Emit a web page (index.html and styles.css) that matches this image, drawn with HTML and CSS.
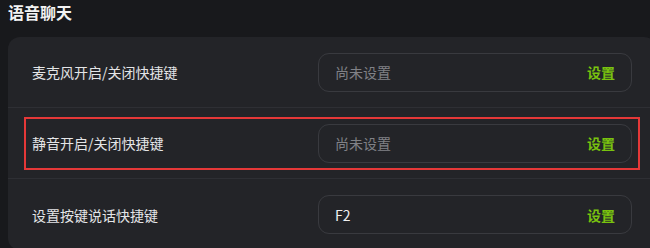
FILE: index.html
```html
<!DOCTYPE html>
<html lang="zh-CN">
<head>
  <meta charset="UTF-8" />
  <meta name="viewport" content="width=device-width, initial-scale=1.0"/>
  <title>语音聊天</title>
  <link rel="stylesheet" href="styles.css">
</head>
<body>
  <div class="section-title">语音聊天</div>

  <div class="panel">
    <div class="row">
      <div class="row-inner">
        <div class="label">麦克风开启/关闭快捷键</div>
        <div class="hotkey">
          <span class="value empty">尚未设置</span>
          <span class="set-btn">设置</span>
        </div>
      </div>
    </div>

    <div class="row">
      <div class="row-inner highlight">
        <div class="label">静音开启/关闭快捷键</div>
        <div class="hotkey">
          <span class="value empty">尚未设置</span>
          <span class="set-btn">设置</span>
        </div>
      </div>
    </div>

    <div class="row">
      <div class="row-inner">
        <div class="label">设置按键说话快捷键</div>
        <div class="hotkey">
          <span class="value">F2</span>
          <span class="set-btn">设置</span>
        </div>
      </div>
    </div>
  </div>
</body>
</html>
```

FILE: styles.css
```css
* {
  box-sizing: border-box;
  margin: 0;
  padding: 0;
}
body {
  background-color: #18191c;
  font-family: "Noto Sans CJK SC", "Noto Sans", sans-serif;
  color: #e4e5e7;
  padding: 0 8px;
  overflow: hidden;
}
.section-title {
  font-size: 16px;
  font-weight: bold;
  color: #f2f2f2;
  line-height: 24px;
  margin-bottom: 13px;
}
.panel {
  width: 648px;
  background-color: #232428;
  border-radius: 12px;
}
.row {
  height: 71px;
  padding: 0 16px;
  display: flex;
  align-items: center;
  border-bottom: 1px solid #2e2f34;
}
.row:last-child {
  border-bottom: none;
}
.row-inner {
  flex: 1;
  height: 53px;
  display: flex;
  align-items: center;
  justify-content: space-between;
  padding: 0 6px;
  border: 2px solid transparent;
}
.row-inner.highlight {
  border-color: #e53838;
}
.label {
  font-size: 14px;
  color: #e4e5e7;
}
.hotkey {
  width: 314px;
  height: 39px;
  border: 1px solid #393a3f;
  border-radius: 11px;
  display: flex;
  align-items: center;
  justify-content: space-between;
  padding: 0 16px;
  font-size: 14px;
}
.value {
  color: #f0f0f0;
}
.value.empty {
  color: #808186;
}
.set-btn {
  color: #79c20f;
  font-weight: bold;
  cursor: pointer;
}
```
